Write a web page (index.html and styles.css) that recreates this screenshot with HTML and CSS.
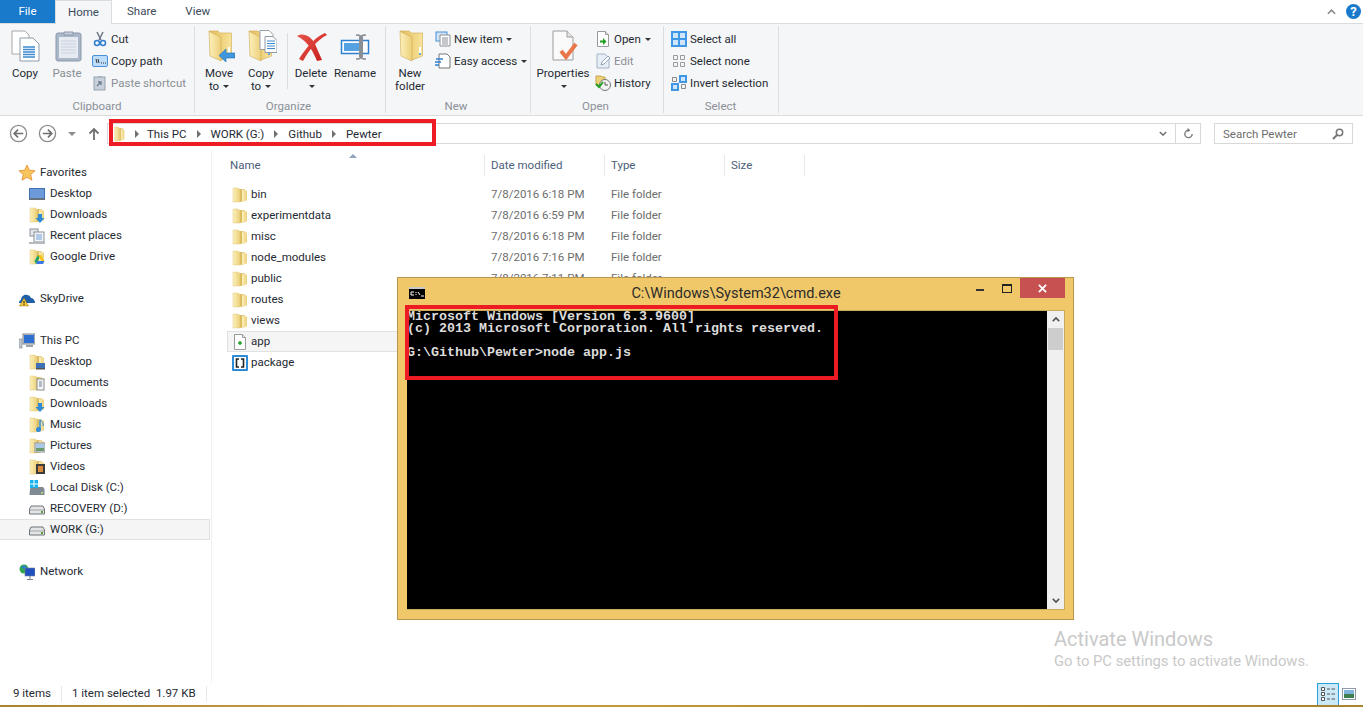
FILE: index.html
```html
<!DOCTYPE html>
<html lang="en">
<head>
    <meta charset="UTF-8">
    <title>Pewter</title>
    <link rel="stylesheet" href="styles.css">
</head>
<body>
    <svg class="defs" aria-hidden="true">
        <defs>
            <linearGradient id="gold" x1="0" y1="0" x2="1" y2="0">
                <stop offset="0" stop-color="#fbf0bb"/>
                <stop offset="1" stop-color="#ecd07a"/>
            </linearGradient>
            <linearGradient id="goldBack" x1="0" y1="0" x2="1" y2="0">
                <stop offset="0" stop-color="#e3bd5a"/>
                <stop offset="1" stop-color="#f8e39a"/>
            </linearGradient>
            <linearGradient id="redX" x1="0" y1="0" x2="1" y2="1">
                <stop offset="0" stop-color="#e8554a"/>
                <stop offset="1" stop-color="#c8201c"/>
            </linearGradient>
            <symbol id="folder" viewBox="0 0 16 16">
                <path d="M1 1h5l1 1h1v13H1z" fill="url(#gold)" stroke="#e0c87c" stroke-width=".5"/>
                <path d="M8 2l5 .5V14l-5 1z" fill="#dcbc60"/>
                <path d="M10 3l5 .5v10l-5 1z" fill="url(#gold)"/>
            </symbol>
            <symbol id="folderBig" viewBox="0 0 32 32">
                <path d="M6 1h9l2 2h11.500v23L18 30z" fill="url(#goldBack)" stroke="#d0aa50" stroke-width=".6"/>
                <path d="M6 1.500L18 7v24L7 26z" fill="url(#gold)" stroke="#d0aa50" stroke-width=".6"/>
                <path d="M25 17h2v8h-2z" fill="#fff"/>
                <path d="M25 23h2v2h-2z" fill="#6aa5dc"/>
            </symbol>
            <symbol id="sheet" viewBox="0 0 16 16">
                <path d="M2.500 .5h8l3 3v12h-11z" fill="#fff" stroke="#9a9a9a"/>
                <path d="M10.500 .5v3h3" fill="#e4e4e4" stroke="#9a9a9a"/>
            </symbol>
            <symbol id="drive" viewBox="0 0 16 16">
                <path d="M2 5h12l1.500 3v5H.5V8z" fill="#e2e4e6" stroke="#6f7479"/>
                <path d="M1 9h14" stroke="#9ea3a8"/>
                <path d="M12 10h2v2h-2z" fill="#5aa02c"/>
            </symbol>
        </defs>
    </svg>

    <div class="explorer">
        <div class="tabs">
            <div class="tab tab-file">File</div>
            <div class="tab tab-active">Home</div>
            <div class="tab tab-share">Share</div>
            <div class="tab tab-view">View</div>
            <div class="tabs-right">
                <svg class="chev" viewBox="0 0 10 6"><path d="M1 5l4-4 4 4" fill="none" stroke="#8a8a8a" stroke-width="1.800"/></svg>
                <div class="help">?</div>
            </div>
        </div>

        <div class="ribbon">
            <div class="group group-clip">
                <div class="group-body">
                    <div class="big w34">
                        <svg class="big-ico" viewBox="0 0 32 32">
                            <path d="M3 1h13l4 4v19H3z" fill="#fff" stroke="#a8a8a8"/>
                            <path d="M11 8h13l6 6v17H11z" fill="#fff" stroke="#8f9aa8"/>
                            <path d="M14 17h12M14 19.500h12M14 22h12M14 24.500h12M14 27h12" stroke="#3d8ad0" stroke-width="1.300"/>
                        </svg>
                        <span>Copy</span>
                    </div>
                    <div class="big w34 off">
                        <svg class="big-ico" viewBox="0 0 32 32">
                            <rect x="5" y="3" width="25" height="28" rx="2" fill="#aab7c9" stroke="#8c99ab"/>
                            <rect x="8" y="7" width="19" height="21" fill="#e6ebf2"/>
                            <path d="M13 5h9V2h-9z" fill="#c6ced8" stroke="#8c99ab"/>
                            <path d="M10 11h15M10 14h15M10 17h15M10 20h15M10 23h15" stroke="#c9d1dc"/>
                        </svg>
                        <span>Paste</span>
                    </div>
                    <div class="small-col">
                        <div class="small">
                            <svg class="ico" viewBox="0 0 16 16"><path d="M5 1l4 8M11 1L7 9" stroke="#6b7785" stroke-width="1.500"/><circle cx="5" cy="12" r="2.500" fill="none" stroke="#2f7fd0" stroke-width="1.500"/><circle cx="11" cy="12" r="2.500" fill="none" stroke="#2f7fd0" stroke-width="1.500"/></svg>
                            <span>Cut</span>
                        </div>
                        <div class="small">
                            <svg class="ico" viewBox="0 0 16 16"><rect x=".5" y="2.500" width="15" height="11" rx="1.500" fill="#bcdcfa" stroke="#4a90d9"/><path d="M4 6l1 4M6 6l1 4M9 10h1M11 10h1M13 10h1" stroke="#333"/></svg>
                            <span>Copy path</span>
                        </div>
                        <div class="small off">
                            <svg class="ico" viewBox="0 0 16 16"><rect x="2" y="2" width="11" height="13" fill="#c6cfda" stroke="#98a3b0"/><path d="M6 1h4v2H6z" fill="#aab4c0"/><path d="M5 11l4-4M6 7h3v3" fill="none" stroke="#6f7f92" stroke-width="1.300"/></svg>
                            <span>Paste shortcut</span>
                        </div>
                    </div>
                </div>
                <div class="group-label">Clipboard</div>
            </div>

            <div class="group group-org">
                <div class="group-body">
                    <div class="big w38">
                        <svg class="big-ico" viewBox="0 0 32 32">
                            <use href="#folderBig"/>
                            <path d="M16 25.500L23 19v4h9v5h-9v4z" fill="#3f97dd" stroke="#1f6fb5" stroke-width=".6"/>
                        </svg>
                        <span>Move<br>to <i class="caret"></i></span>
                    </div>
                    <div class="big w38">
                        <svg class="big-ico" viewBox="0 0 32 32">
                            <use href="#folderBig" x="-2"/>
                            <path d="M15 .5h9l4 4v15H15z" fill="#fff" stroke="#98a0aa"/>
                            <path d="M20 6.500h8l4 4v12H20z" fill="#fff" stroke="#8f9aa8"/>
                            <path d="M22 11h8M22 13.500h8M22 16h8M22 18.500h8" stroke="#3d8ad0"/>
                        </svg>
                        <span>Copy<br>to <i class="caret"></i></span>
                    </div>
                    <div class="vline"></div>
                    <div class="big w38">
                        <svg class="big-ico" viewBox="0 0 32 32">
                            <path d="M2 6C8 2 16 6 20 14l7 16-5 1C18 22 14 12 2 6z" fill="url(#redX)"/>
                            <path d="M32 5l-2-2C22 6 12 16 4 29l4 2C14 20 22 10 32 5z" fill="url(#redX)"/>
                        </svg>
                        <span>Delete<br><i class="caret"></i></span>
                    </div>
                    <div class="big w42">
                        <svg class="big-ico" viewBox="0 0 32 32">
                            <rect x="2.500" y="10.500" width="27" height="13" fill="#fff" stroke="#2f7fd0" stroke-width="1.500"/>
                            <rect x="5" y="13" width="15" height="8" fill="#55a2e2"/>
                            <path d="M22 7v20" stroke="#8a8f96" stroke-width="4"/>
                            <path d="M17 5c3 0 4 0 5 2 1-2 2-2 5-2M17 29c3 0 4 0 5-2 1 2 2 2 5 2" fill="none" stroke="#8a8f96" stroke-width="1.600"/>
                        </svg>
                        <span>Rename</span>
                    </div>
                </div>
                <div class="group-label">Organize</div>
            </div>

            <div class="group group-new">
                <div class="group-body">
                    <div class="big w40">
                        <svg class="big-ico" viewBox="0 0 32 32"><use href="#folderBig"/></svg>
                        <span>New<br>folder</span>
                    </div>
                    <div class="small-col col-shift">
                        <div class="small">
                            <svg class="ico" viewBox="0 0 16 16"><rect x="1" y="1" width="11" height="9" fill="#cfe4f8" stroke="#4a90d9"/><path d="M5 4h10v11H5z" fill="#fff" stroke="#8a8f96"/><path d="M7 7h6M7 9h6M7 11h6M7 13h6" stroke="#8a8f96"/></svg>
                            <span>New item <i class="caret"></i></span>
                        </div>
                        <div class="small">
                            <svg class="ico" viewBox="0 0 16 16"><path d="M4 1h8l3 3v11H4z" fill="#fff" stroke="#777"/><path d="M1 6h7M0 9h6M0 12h4" stroke="#2f7fd0" stroke-width="1.300"/></svg>
                            <span>Easy access <i class="caret"></i></span>
                        </div>
                    </div>
                </div>
                <div class="group-label">New</div>
            </div>

            <div class="group group-open">
                <div class="group-body">
                    <div class="big w54">
                        <svg class="big-ico" viewBox="0 0 32 32">
                            <path d="M6 1h14l6 6v23H6z" fill="#fafafa" stroke="#9c9c9c"/>
                            <path d="M20 1v6h6" fill="#e4e4e4" stroke="#9c9c9c"/>
                            <path d="M14 21l5 6 10-13" fill="none" stroke="#e8774a" stroke-width="4"/>
                        </svg>
                        <span>Properties<br><i class="caret"></i></span>
                    </div>
                    <div class="small-col col-shift">
                        <div class="small">
                            <svg class="ico" viewBox="0 0 16 16"><use href="#sheet"/><path d="M5 9.500h3V7l3.500 3.500L8 14v-2.500H5z" fill="#1f9e1f"/></svg>
                            <span>Open <i class="caret"></i></span>
                        </div>
                        <div class="small off">
                            <svg class="ico" viewBox="0 0 16 16"><path d="M2 1h8l4 4v10H2z" fill="#e8eef6" stroke="#a4b4c8"/><path d="M6 12l1-3 6-6 2 2-6 6z" fill="#fff" stroke="#8fa2ba"/></svg>
                            <span>Edit</span>
                        </div>
                        <div class="small">
                            <svg class="ico ico-hist" viewBox="0 0 16 16"><path d="M1 1h5l1 1h3v8H1z" fill="#eed27a" stroke="#c6a24a"/><circle cx="10" cy="10" r="5.500" fill="#f2f2f2" stroke="#777"/><path d="M10 7v3h3" fill="none" stroke="#555"/><path d="M1 9l3 3 4-5" fill="none" stroke="#1f9e1f" stroke-width="2"/></svg>
                            <span>History</span>
                        </div>
                    </div>
                </div>
                <div class="group-label">Open</div>
            </div>

            <div class="group group-select">
                <div class="group-body">
                    <div class="small-col">
                        <div class="small">
                            <svg class="ico" viewBox="0 0 16 16"><rect width="16" height="16" fill="#3f97e6"/><path d="M2 2h5v5H2zM9 2h5v5H9zM2 9h5v5H2zM9 9h5v5H9z" fill="#cfe6fa"/></svg>
                            <span>Select all</span>
                        </div>
                        <div class="small">
                            <svg class="ico" viewBox="0 0 16 16"><path d="M2.500 2.500h4v4h-4zM9.500 2.500h4v4h-4zM2.500 9.500h4v4h-4zM9.500 9.500h4v4h-4z" fill="none" stroke="#9a9a9a"/></svg>
                            <span>Select none</span>
                        </div>
                        <div class="small">
                            <svg class="ico" viewBox="0 0 16 16"><path d="M1.500 2.500h4v4h-4zM10.500 9.500h4v4h-4z" fill="none" stroke="#8a8a8a"/><path d="M8 0h8v8H8zM0 8h8v8H0z" fill="#3f97e6"/><path d="M10 2h4v4h-4zM2 10h4v4H2z" fill="#cfe6fa"/></svg>
                            <span>Invert selection</span>
                        </div>
                    </div>
                </div>
                <div class="group-label">Select</div>
            </div>
        </div>

        <div class="addressbar">
            <svg class="nav-ico" viewBox="0 0 20 20"><circle cx="10" cy="10" r="8.500" fill="none" stroke="#8c8c8c" stroke-width="1.400"/><path d="M15 10H6M9.500 6L5.500 10l4 4" fill="none" stroke="#6f6f6f" stroke-width="1.800"/></svg>
            <svg class="nav-ico nav-fwd" viewBox="0 0 20 20"><circle cx="10" cy="10" r="8.500" fill="none" stroke="#8c8c8c" stroke-width="1.400"/><path d="M5 10h9M10.500 6l4 4-4 4" fill="none" stroke="#6f6f6f" stroke-width="1.800"/></svg>
            <i class="nav-caret"></i>
            <svg class="nav-up" viewBox="0 0 12 14"><path d="M6 13V2M1.500 6.500L6 2l4.500 4.500" fill="none" stroke="#6f6f6f" stroke-width="1.800"/></svg>
            <div class="path">
                <svg class="ico ico-path" viewBox="0 0 16 16" preserveAspectRatio="none"><use href="#folder"/></svg>
                <i class="crumb-arrow"></i><span>This PC</span>
                <i class="crumb-arrow"></i><span>WORK (G:)</span>
                <i class="crumb-arrow"></i><span>Github</span>
                <i class="crumb-arrow"></i><span>Pewter</span>
                <div class="path-end">
                    <svg class="path-chev" viewBox="0 0 10 6"><path d="M1 1l4 4 4-4" fill="none" stroke="#6f6f6f" stroke-width="1.800"/></svg>
                    <div class="path-refresh">
                        <svg class="refresh" viewBox="0 0 12 12"><path d="M6 2.500A4 4 0 1 0 10 6.500" fill="none" stroke="#7a7a7a" stroke-width="1.500"/><path d="M5 0v5l3-2.500z" fill="#7a7a7a"/></svg>
                    </div>
                </div>
            </div>
            <div class="search">
                <span>Search Pewter</span>
                <svg class="search-ico" viewBox="0 0 12 12"><circle cx="7.500" cy="4.500" r="3.200" fill="none" stroke="#777" stroke-width="1.500"/><path d="M5 7l-4 4" stroke="#777" stroke-width="2"/></svg>
            </div>
        </div>

        <div class="main">
            <div class="sidebar">
                <div class="nav-row nav-top">
                    <svg class="ico" viewBox="0 0 16 16"><path d="M8 0l2.300 5.200 5.700.6-4.300 3.800 1.300 5.600L8 12.300 3 15.200l1.300-5.600L0 5.800l5.700-.6z" fill="#f8c45c" stroke="#e58a2c" stroke-width=".8"/></svg>
                    <span>Favorites</span>
                </div>
                <div class="nav-row nav-sub">
                    <svg class="ico" viewBox="0 0 16 16"><rect y="2" width="16" height="12" fill="#3f6fb5"/><rect x="1" y="3" width="14" height="9" fill="#6d9ad8"/><rect y="12" width="16" height="2" fill="#68727e"/></svg>
                    <span>Desktop</span>
                </div>
                <div class="nav-row nav-sub">
                    <svg class="ico" viewBox="0 0 16 16"><use href="#folder"/><path d="M9 7h4v4h2.500L11 16l-4.500-5H9z" fill="#2f8ad8"/></svg>
                    <span>Downloads</span>
                </div>
                <div class="nav-row nav-sub">
                    <svg class="ico" viewBox="0 0 16 16"><rect x="1" y="1" width="8" height="7" fill="#e4e8ec" stroke="#8a9098"/><rect x="5" y="4" width="10" height="10" fill="#f2f4f6" stroke="#8a9098"/><path d="M7 7h6M7 9h6M7 11h6" stroke="#6fa0d8"/><path d="M0 14h16v2H0z" fill="#b4bac0"/></svg>
                    <span>Recent places</span>
                </div>
                <div class="nav-row nav-sub">
                    <svg class="ico" viewBox="0 0 16 16"><use href="#folder"/><path d="M9 6l3 0 3.500 6h-3z" fill="#f4c20d"/><path d="M9 6l-3.500 6 1.500 3 3.500-6z" fill="#1da462"/><path d="M7 15h7l1.500-3H8.500z" fill="#3b78e7"/></svg>
                    <span>Google Drive</span>
                </div>
                <div class="nav-gap"></div>
                <div class="nav-row nav-top">
                    <svg class="ico" viewBox="0 0 16 16"><path d="M0 12c0-2 1-3 2-3 0-3 3-6 6-5 2 0 3 1 4 3 2 0 4 2 4 5z" fill="#1f5fa8"/><path d="M5 7l4.500 8H.5z" fill="#f3c83a" stroke="#8a6d10" stroke-width=".5"/><path d="M5 10v2.500M5 13v1" stroke="#222"/></svg>
                    <span>SkyDrive</span>
                </div>
                <div class="nav-gap"></div>
                <div class="nav-row nav-top">
                    <svg class="ico" viewBox="0 0 16 16"><rect x="4" y="1" width="12" height="10" fill="#cfd6de" stroke="#7a838d"/><rect x="5" y="2" width="10" height="8" fill="#2f6fd0"/><rect x="7" y="12" width="7" height="2" fill="#9aa2ab"/><rect y="6" width="3" height="9" fill="#c2c8ce" stroke="#7a838d" stroke-width=".6"/></svg>
                    <span>This PC</span>
                </div>
                <div class="nav-row nav-sub">
                    <svg class="ico" viewBox="0 0 16 16"><use href="#folder"/><rect x="7" y="9" width="9" height="6" fill="#3f6fb5"/><rect x="7" y="14" width="9" height="1.500" fill="#555"/></svg>
                    <span>Desktop</span>
                </div>
                <div class="nav-row nav-sub">
                    <svg class="ico" viewBox="0 0 16 16"><use href="#folder"/><rect x="8" y="4" width="7" height="11" fill="#f5f5f5" stroke="#8a8a8a"/><path d="M10 7h3M10 9h3M10 11h3" stroke="#6f7f92"/></svg>
                    <span>Documents</span>
                </div>
                <div class="nav-row nav-sub">
                    <svg class="ico" viewBox="0 0 16 16"><use href="#folder"/><path d="M9 7h4v4h2.500L11 16l-4.500-5H9z" fill="#2f8ad8"/></svg>
                    <span>Downloads</span>
                </div>
                <div class="nav-row nav-sub">
                    <svg class="ico" viewBox="0 0 16 16"><use href="#folder"/><path d="M11 3v9" stroke="#2f8ad8" stroke-width="1.500"/><circle cx="9.500" cy="12.500" r="2.500" fill="#2f8ad8"/><path d="M11 3c2 1 4 3 3 6" fill="none" stroke="#2f8ad8"/></svg>
                    <span>Music</span>
                </div>
                <div class="nav-row nav-sub">
                    <svg class="ico" viewBox="0 0 16 16"><use href="#folder"/><rect x="6" y="5" width="10" height="9" fill="#e4e8ec" stroke="#8a9098"/><path d="M7 10h8v3H7z" fill="#6a9a6a"/><path d="M7 6h8v4H7z" fill="#a8c8e8"/></svg>
                    <span>Pictures</span>
                </div>
                <div class="nav-row nav-sub">
                    <svg class="ico" viewBox="0 0 16 16"><use href="#folder"/><rect x="7" y="5" width="9" height="10" fill="#3c3c3c"/><path d="M9 7h5v6H9z" fill="#d88a3c"/></svg>
                    <span>Videos</span>
                </div>
                <div class="nav-row nav-sub">
                    <svg class="ico" viewBox="0 0 16 16"><path d="M1 9l1-2h12l1.500 2v6H.5z" fill="#7f8a94"/><path d="M12 12h2v1.500h-2z" fill="#b6e36a"/><path d="M1 0h3.500v3.500H1zM5.500 0H9v3.500H5.500zM1 4.500h3.500V8H1zM5.500 4.500H9V8H5.500z" fill="#14b4f0"/></svg>
                    <span>Local Disk (C:)</span>
                </div>
                <div class="nav-row nav-sub">
                    <svg class="ico" viewBox="0 0 16 16"><use href="#drive"/></svg>
                    <span>RECOVERY (D:)</span>
                </div>
                <div class="nav-row nav-sub nav-selected">
                    <svg class="ico" viewBox="0 0 16 16"><use href="#drive"/></svg>
                    <span>WORK (G:)</span>
                </div>
                <div class="nav-gap"></div>
                <div class="nav-row nav-top">
                    <svg class="ico" viewBox="0 0 16 16"><circle cx="5" cy="5" r="4.500" fill="#2fa84f"/><path d="M2 3c2-2 4-2 6 0-1 2-3 3-6 0z" fill="#2f7fd0"/><rect x="6" y="4" width="10" height="8" fill="#1f4fc0" stroke="#7a838d" stroke-width=".6"/><path d="M11 12v3M8 15.500h6" stroke="#7a838d"/></svg>
                    <span>Network</span>
                </div>
            </div>

            <div class="list">
                <div class="list-head">
                    <div class="col col-name">Name<i class="sort-arrow"></i></div>
                    <div class="col col-date">Date modified</div>
                    <div class="col col-type">Type</div>
                    <div class="col col-size">Size</div>
                </div>
                <div class="file-row"><div class="file-name"><svg class="ico" viewBox="0 0 16 16"><use href="#folder"/></svg>bin</div><div>7/8/2016 6:18 PM</div><div>File folder</div></div>
                <div class="file-row"><div class="file-name"><svg class="ico" viewBox="0 0 16 16"><use href="#folder"/></svg>experimentdata</div><div>7/8/2016 6:59 PM</div><div>File folder</div></div>
                <div class="file-row"><div class="file-name"><svg class="ico" viewBox="0 0 16 16"><use href="#folder"/></svg>misc</div><div>7/8/2016 6:18 PM</div><div>File folder</div></div>
                <div class="file-row"><div class="file-name"><svg class="ico" viewBox="0 0 16 16"><use href="#folder"/></svg>node_modules</div><div>7/8/2016 7:16 PM</div><div>File folder</div></div>
                <div class="file-row"><div class="file-name"><svg class="ico" viewBox="0 0 16 16"><use href="#folder"/></svg>public</div><div>7/8/2016 7:11 PM</div><div>File folder</div></div>
                <div class="file-row"><div class="file-name"><svg class="ico" viewBox="0 0 16 16"><use href="#folder"/></svg>routes</div></div>
                <div class="file-row"><div class="file-name"><svg class="ico" viewBox="0 0 16 16"><use href="#folder"/></svg>views</div></div>
                <div class="file-row file-selected"><div class="file-name"><svg class="ico" viewBox="0 0 16 16"><use href="#sheet"/><path d="M6 9h4M8 7v4" stroke="#1f9e1f" stroke-width="1.400"/></svg>app</div></div>
                <div class="file-row"><div class="file-name"><svg class="ico" viewBox="0 0 16 16"><rect width="16" height="16" rx="1" fill="#2f8ad8"/><rect x="2" y="2" width="12" height="12" fill="#fff"/><path d="M7 4H4.500v8H7M9 4h2.500v8H9" fill="none" stroke="#222" stroke-width="1.600"/></svg>package</div></div>
            </div>
        </div>

        <div class="statusbar">
            <span class="status-count">9 items</span>
            <span class="status-sel">1 item selected&nbsp; 1.97 KB</span>
            <div class="view-btns">
                <div class="view-btn view-on">
                    <svg class="view-ico" viewBox="0 0 16 16"><path d="M1.500 1.500h3v3h-3zM1.500 6.500h3v3h-3zM1.500 11.500h3v3h-3z" fill="#fff" stroke="#555"/><path d="M7 3h3M11.500 3H15M7 8h3M11.500 8H15M7 13h3M11.500 13H15" stroke="#555"/></svg>
                </div>
                <div class="view-btn">
                    <svg class="view-ico" viewBox="0 0 16 16"><rect x=".5" y="2.500" width="13" height="11" fill="#fff" stroke="#8c9aac"/><path d="M2 4h10v4H2z" fill="#7fb4e0"/><path d="M2 8h10v4H2z" fill="#3f7f4f"/></svg>
                </div>
            </div>
        </div>
        <div class="taskbar-edge"></div>
    </div>

    <!-- annotation on the path bar -->
    <div class="mark mark-path"></div>

    <div class="watermark">
        <div class="wm-big">Activate Windows</div>
        <div class="wm-small">Go to PC settings to activate Windows.</div>
    </div>

    <div class="cmd">
        <div class="cmd-title">
            <svg class="cmd-ico" viewBox="0 0 16 12"><rect width="16" height="12" fill="#000"/><rect width="16" height="2" fill="#c8c8c8"/><path d="M2 5h3M2 5v3M2 8h3M7 5v1M7 7v1M9 5l2 3M12 9h3" stroke="#fff"/></svg>
            <div class="cmd-name">C:\Windows\System32\cmd.exe</div>
            <div class="cmd-btns">
                <div class="cmd-btn"><i class="cmd-min"></i></div>
                <div class="cmd-btn"><i class="cmd-max"></i></div>
                <div class="cmd-close">
                    <svg class="cmd-x" viewBox="0 0 10 10"><path d="M1 1l8 8M9 1l-8 8" stroke="#fff" stroke-width="2"/></svg>
                </div>
            </div>
        </div>
        <div class="cmd-body">
            <pre class="console">Microsoft Windows [Version 6.3.9600]
(c) 2013 Microsoft Corporation. All rights reserved.

G:\Github\Pewter&gt;node app.js</pre>
            <div class="scroll">
                <svg class="scroll-arrow" viewBox="0 0 10 6"><path d="M1 5l4-4 4 4" fill="none" stroke="#555" stroke-width="2"/></svg>
                <div class="scroll-thumb"></div>
                <svg class="scroll-arrow scroll-down" viewBox="0 0 10 6"><path d="M1 1l4 4 4-4" fill="none" stroke="#555" stroke-width="2"/></svg>
            </div>
        </div>
        <div class="mark mark-cmd"></div>
    </div>
</body>
</html>
```

FILE: styles.css
```css
html, body {
    margin: 0;
    padding: 0;
    height: 100%;
    overflow: hidden;
    background: #fff;
}

body {
    position: relative;
    font-family: Roboto, "Open Sans", sans-serif;
    font-size: 11.5px;
    color: #1f2a33;
}

.defs {
    display: block;
    width: 0;
    height: 0;
}

.explorer {
    display: flex;
    flex-direction: column;
    height: 707px;
}

.ico {
    width: 16px;
    height: 16px;
    flex: none;
}

/* tabs */
.tabs {
    display: flex;
    height: 24px;
    flex: none;
    box-sizing: border-box;
    border-bottom: 1px solid #dadbdc;
}

.tab {
    height: 23px;
    line-height: 23px;
    color: #3b4a59;
}

.tab-file {
    width: 55px;
    background: #1979ca;
    color: #fff;
    text-align: center;
}

.tab-active {
    width: 57px;
    height: 24px;
    box-sizing: border-box;
    background: #f5f6f7;
    border: 1px solid #dadbdc;
    border-bottom: none;
    text-align: center;
}

.tab-share {
    margin-left: 15px;
}

.tab-view {
    margin-left: 29px;
}

.tabs-right {
    margin-left: auto;
    display: flex;
    align-items: center;
    gap: 10px;
    padding-right: 2px;
}

.chev {
    width: 9px;
    height: 6px;
}

.help {
    width: 15px;
    height: 15px;
    border-radius: 50%;
    background: #1979ca;
    color: #fff;
    font-weight: bold;
    font-size: 13px;
    line-height: 15px;
    text-align: center;
}

/* ribbon */
.ribbon {
    display: flex;
    height: 92px;
    flex: none;
    box-sizing: border-box;
    padding-top: 2px;
    background: #f5f6f7;
    border-bottom: 1px solid #dadbdc;
}

.group {
    height: 87px;
    box-sizing: border-box;
    border-right: 1px solid #dcdddf;
    display: flex;
    flex-direction: column;
}

.group-clip { width: 195px; padding-left: 8px; }
.group-org { width: 191px; padding-left: 5px; }
.group-new { width: 145px; padding-left: 4px; }
.group-open { width: 133px; padding-left: 5px; }
.group-select { width: 115px; padding-left: 7px; }

.group-body {
    display: flex;
    height: 73px;
    padding-top: 3px;
    box-sizing: border-box;
    gap: 4px;
    flex: none;
}

.group-clip .group-body { gap: 8px; }

.group-label {
    height: 14px;
    line-height: 14px;
    text-align: center;
    color: #8b9097;
    margin-left: -8px;
}

.big {
    display: flex;
    flex-direction: column;
    align-items: center;
    text-align: center;
    line-height: 13px;
    flex: none;
}

.big-ico {
    width: 32px;
    height: 32px;
    margin-top: 1px;
    margin-bottom: 5px;
    flex: none;
}

.w34 { width: 34px; }
.w38 { width: 38px; }
.w40 { width: 40px; }
.w42 { width: 42px; }
.w54 { width: 54px; }

.off {
    color: #8a8f96;
}

.vline {
    width: 1px;
    height: 56px;
    margin: 4px 0 0 3px;
    background: #dcdddf;
}

.small-col {
    display: flex;
    flex-direction: column;
    margin-top: -1px;
}

.col-shift {
    margin-left: 1px;
}

.small {
    display: flex;
    align-items: center;
    gap: 3px;
    height: 22px;
    white-space: nowrap;
}

.caret {
    display: inline-block;
    width: 0;
    height: 0;
    margin-left: 1px;
    vertical-align: middle;
    border-left: 3px solid transparent;
    border-right: 3px solid transparent;
    border-top: 3px solid #333;
}

/* address bar */
.addressbar {
    display: flex;
    align-items: center;
    height: 34px;
    flex: none;
    box-sizing: border-box;
    padding: 1px 10px 0 9px;
}

.nav-ico {
    width: 19px;
    height: 19px;
    flex: none;
}

.nav-fwd {
    margin-left: 10px;
}

.nav-caret {
    margin-left: 11px;
    border-left: 4px solid transparent;
    border-right: 4px solid transparent;
    border-top: 4px solid #8c8c8c;
}

.nav-up {
    width: 12px;
    height: 14px;
    margin-left: 12px;
    flex: none;
}

.path {
    display: flex;
    align-items: center;
    width: 1094px;
    height: 21px;
    margin-left: 7px;
    box-sizing: border-box;
    border: 1px solid #d9d9d9;
    padding-left: 6px;
    flex: none;
}

.ico-path {
    width: 11px;
    height: 16px;
}

.crumb-arrow {
    width: 0;
    height: 0;
    margin: 0 10px;
    border-top: 4px solid transparent;
    border-bottom: 4px solid transparent;
    border-left: 4px solid #707070;
}

.ico-path + .crumb-arrow {
    margin-right: 8px;
}

.path-end {
    margin-left: auto;
    display: flex;
    align-items: center;
    height: 100%;
}

.path-chev {
    width: 8px;
    height: 5px;
    margin-right: 8px;
}

.path-refresh {
    width: 24px;
    height: 100%;
    border-left: 1px solid #d9d9d9;
    display: flex;
    align-items: center;
    justify-content: center;
}

.refresh {
    width: 11px;
    height: 11px;
}

.search {
    display: flex;
    align-items: center;
    justify-content: space-between;
    width: 139px;
    height: 21px;
    margin-left: 13px;
    box-sizing: border-box;
    border: 1px solid #d9d9d9;
    padding: 0 8px;
    color: #6d6d6d;
    flex: none;
}

.search-ico {
    width: 12px;
    height: 12px;
}

/* main panes */
.main {
    display: flex;
    flex: 1;
    min-height: 0;
}

.sidebar {
    width: 212px;
    flex: none;
    box-sizing: border-box;
    padding-top: 12px;
    border-right: 1px solid #f0f0f0;
}

.nav-row {
    display: flex;
    align-items: center;
    height: 21px;
    box-sizing: border-box;
    gap: 5px;
    white-space: nowrap;
}

.nav-row span {
    padding-bottom: 2px;
}

.nav-top { padding-left: 19px; }
.nav-sub { padding-left: 29px; }
.nav-gap { height: 21px; }

.nav-selected {
    background: #f5f5f5;
    border: 1px solid #e1e1e1;
    border-left: none;
    margin-right: 1px;
}

.list {
    flex: 1;
}

.list-head {
    display: flex;
    height: 21px;
    margin: 5px 0 8px 12px;
    color: #4c607a;
}

.col {
    box-sizing: border-box;
    line-height: 21px;
    border-right: 1px solid #e8e8e8;
}

.col-name {
    position: relative;
    width: 261px;
    padding-left: 6px;
}

.col-date,
.col-type { width: 120px; padding-left: 6px; }
.col-size { width: 80px; padding-left: 6px; }

.sort-arrow {
    position: absolute;
    left: 125px;
    top: -1px;
    width: 0;
    height: 0;
    border-left: 4px solid transparent;
    border-right: 4px solid transparent;
    border-bottom: 4px solid #8fa4bd;
}

.file-row {
    display: grid;
    grid-template-columns: 264px 120px 120px;
    height: 21px;
    box-sizing: border-box;
    line-height: 21px;
    margin-left: 15px;
    width: 580px;
    color: #6d6d6d;
}

.file-name {
    display: flex;
    align-items: center;
    gap: 3px;
    padding-left: 5px;
    color: #1f2a33;
}

.file-selected {
    background: #f5f5f5;
    border: 1px solid #e1e1e1;
    line-height: 19px;
}

.file-selected .file-name {
    padding-left: 4px;
}

/* status bar */
.statusbar {
    display: flex;
    align-items: center;
    height: 22px;
    flex: none;
    padding-left: 13px;
}

.status-count {
    padding: 0 10px 2px 0;
    border-right: 1px solid #e8e8e8;
}

.status-sel {
    padding: 0 10px 2px;
    border-right: 1px solid #e8e8e8;
}

.view-btns {
    margin-left: auto;
    display: flex;
    align-items: center;
    padding-right: 2px;
}

.view-btn {
    width: 22px;
    height: 23px;
    box-sizing: border-box;
    display: flex;
    align-items: center;
    justify-content: center;
}

.view-on {
    background: #cbe8f6;
    border: 1px solid #26a0da;
}

.view-ico {
    width: 16px;
    height: 16px;
}

.taskbar-edge {
    height: 2px;
    flex: none;
    background: linear-gradient(90deg, #a8842f, #c9a24a 30%, #b8922f 60%, #a8842f);
}

/* red annotation boxes */
.mark {
    position: absolute;
    box-sizing: border-box;
    border: 4px solid #ed1c24;
}

.mark-path {
    left: 109px;
    top: 119px;
    width: 327px;
    height: 27px;
}

.mark-cmd {
    left: 7px;
    top: 27px;
    width: 433px;
    height: 75px;
}

.watermark {
    position: absolute;
    left: 1054px;
    top: 627px;
    color: #c9c9c9;
    white-space: nowrap;
}

.wm-big {
    font-size: 20px;
    line-height: 25px;
}

.wm-small {
    font-size: 14.8px;
    line-height: 19px;
}

/* console window floats over the explorer */
.cmd {
    position: absolute;
    left: 397px;
    top: 277px;
    width: 677px;
    height: 343px;
    box-sizing: border-box;
    background: #f0c869;
    border: 1px solid #b8964f;
    display: flex;
    flex-direction: column;
    padding: 0 8px 9px 9px;
}

.cmd-title {
    display: flex;
    align-items: flex-start;
    position: relative;
    height: 32px;
    flex: none;
}

.cmd-ico {
    width: 16px;
    height: 12px;
    margin: 9px 0 0 2px;
}

.cmd-name {
    position: absolute;
    left: 0;
    right: 0;
    top: 7px;
    text-align: center;
    font-size: 14.5px;
    line-height: 18px;
    color: #2b2b2b;
}

.cmd-btns {
    margin-left: auto;
    display: flex;
    position: relative;
}

.cmd-btn {
    width: 27px;
    height: 20px;
    display: flex;
    align-items: center;
    justify-content: center;
}

.cmd-min {
    display: block;
    width: 8px;
    height: 2px;
    margin-top: 4px;
    background: #333;
}

.cmd-max {
    display: block;
    width: 8px;
    height: 6px;
    border: 1px solid #222;
    border-top-width: 2px;
}

.cmd-close {
    width: 45px;
    height: 20px;
    background: #c75050;
    display: flex;
    align-items: center;
    justify-content: center;
}

.cmd-x {
    width: 9px;
    height: 9px;
}

.cmd-body {
    display: flex;
    flex: 1;
    min-height: 0;
    border: 1px solid #c9a95e;
    border-width: 1px 1px 1px 0;
}

.console {
    flex: 1;
    margin: 0;
    padding: 0;
    background: #000;
    color: #dcdcdc;
    font-family: "Liberation Mono", monospace;
    font-weight: bold;
    font-size: 13.33px;
    line-height: 12px;
}

.scroll {
    width: 17px;
    flex: none;
    display: flex;
    flex-direction: column;
    align-items: center;
    background: #f0f0f0;
}

.scroll-arrow {
    width: 8px;
    height: 5px;
    margin: 6px 0;
    flex: none;
}

.scroll-thumb {
    width: 15px;
    height: 22px;
    background: #cdcdcd;
}

.scroll-down {
    margin-top: auto;
}
```
